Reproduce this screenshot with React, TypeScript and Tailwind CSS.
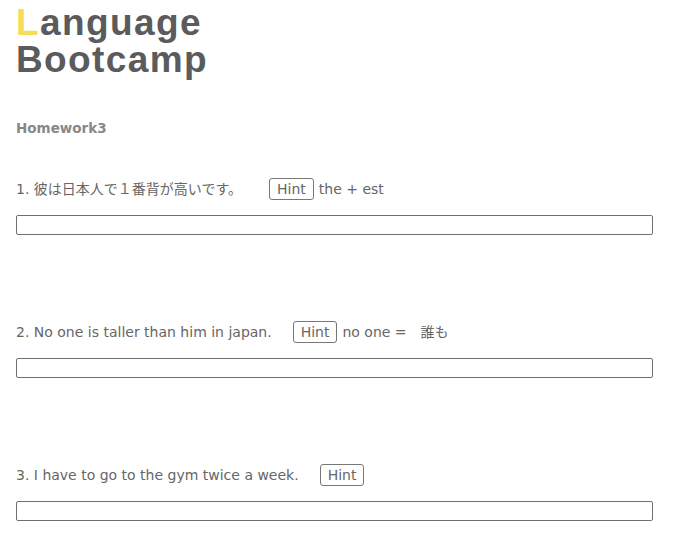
import React from "react"

type Question = {
  label: string
  hint?: string
  gap: string
}

const questions: Question[] = [
  { label: "1. 彼は日本人で１番背が高いです。", hint: "the + est", gap: "ml-[27px]" },
  { label: "2. No one is taller than him in japan.", hint: "no one =　誰も", gap: "ml-[21px]" },
  { label: "3. I have to go to the gym twice a week.", gap: "ml-[21px]" },
]

const bodyFont = {
  fontFamily: '"DejaVu Sans", "Noto Sans CJK JP", sans-serif',
}

export default function App() {
  return (
    <div className="min-h-[535px] bg-white px-4 pt-[4px] text-[#666]" style={bodyFont}>
      <h1
        className="text-[37px] font-bold leading-[37px] tracking-[1.4px] text-[#5b5b5d]"
        style={{ fontFamily: '"Liberation Sans", Arial, sans-serif' }}
      >
        <span className="text-[#f5dc5a]">L</span>anguage
        <br />
        Bootcamp
      </h1>

      <h2 className="mt-[40px] text-[13.5px] font-bold text-[#888]">Homework3</h2>

      <div className="mt-[40px] flex flex-col gap-[86px]">
        {questions.map((q) => (
          <div key={q.label}>
            <div className="flex items-center text-[14px] leading-[22px]">
              <span className="whitespace-pre">{q.label}</span>
              <button
                className={`${q.gap} h-[22px] rounded-[3px] border border-[#777] bg-white px-[7px] text-[14px] leading-[20px] text-[#666]`}
              >
                Hint
              </button>
              {q.hint && <span className="ml-[5px] whitespace-pre">{q.hint}</span>}
            </div>
            <input
              type="text"
              className="mt-[15px] block h-[20px] w-[637px] rounded-[2px] border border-[#707070] bg-white"
            />
          </div>
        ))}
      </div>
    </div>
  )
}
